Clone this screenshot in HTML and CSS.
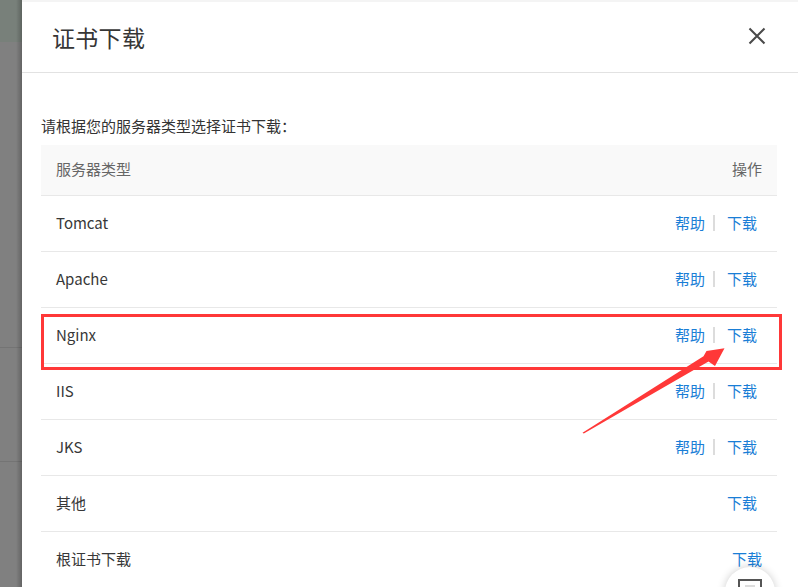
FILE: index.html
```html
<!DOCTYPE html>
<html lang="zh-CN">
<head>
<meta charset="utf-8">
<title>证书下载</title>
<link rel="stylesheet" href="styles.css">
</head>
<body>
<div class="page">
  <div class="backdrop">
    <div class="bd-top"></div>
    <div class="bd-mid"></div>
    <div class="bd-line"></div>
    <div class="bd-mid2"></div>
    <div class="bd-line"></div>
    <div class="bd-rest"></div>
  </div>
  <div class="dialog">
    <div class="dialog-header">
      <h1 class="title">证书下载</h1>
      <svg class="close" width="18" height="18" viewBox="0 0 18 18">
        <path d="M1.5 1.5 L16.5 16.5 M16.5 1.5 L1.5 16.5" stroke="#4a4a4a" stroke-width="2.1" fill="none"/>
      </svg>
    </div>
    <div class="dialog-body">
      <p class="hint">请根据您的服务器类型选择证书下载：</p>
      <div class="table">
        <div class="row head">
          <span class="name">服务器类型</span>
          <span class="ops">操作</span>
        </div>
        <div class="row">
          <span class="name">Tomcat</span>
          <span class="ops"><a class="link">帮助</a><i class="sep"></i><a class="link">下载</a></span>
        </div>
        <div class="row">
          <span class="name">Apache</span>
          <span class="ops"><a class="link">帮助</a><i class="sep"></i><a class="link">下载</a></span>
        </div>
        <div class="row">
          <span class="name">Nginx</span>
          <span class="ops"><a class="link">帮助</a><i class="sep"></i><a class="link">下载</a></span>
        </div>
        <div class="row">
          <span class="name">IIS</span>
          <span class="ops"><a class="link">帮助</a><i class="sep"></i><a class="link">下载</a></span>
        </div>
        <div class="row">
          <span class="name">JKS</span>
          <span class="ops"><a class="link">帮助</a><i class="sep"></i><a class="link">下载</a></span>
        </div>
        <div class="row">
          <span class="name">其他</span>
          <span class="ops"><a class="link">下载</a></span>
        </div>
        <div class="row last">
          <span class="name">根证书下载</span>
          <span class="ops"><a class="link">下载</a></span>
        </div>
      </div>
    </div>
  </div>

  <div class="overlay">
    <div class="mark-box"></div>
    <svg class="mark-arrow" width="798" height="587" viewBox="0 0 798 587">
      <polygon points="582.5,432.8 703.5,356.2 706.5,351 724.5,348.3 715,366 708.5,361.5 583.8,433.6" fill="#ff3838"/>
    </svg>
    <div class="float-btn">
      <svg width="24" height="12" viewBox="0 0 24 12">
        <rect x="1" y="1" width="22" height="14" fill="#fff" stroke="#555" stroke-width="2"/>
        <path d="M7 7 H17" stroke="#bbb" stroke-width="1"/>
      </svg>
    </div>
  </div>
</div>
</body>
</html>
```

FILE: styles.css
```css
* { box-sizing: border-box; }
html, body {
  margin: 0;
  padding: 0;
  width: 798px;
  height: 587px;
  overflow: hidden;
  background: #7f7f7f;
  font-family: "Noto Sans CJK SC", "Noto Sans", sans-serif;
}
.page {
  display: flex;
  width: 798px;
  height: 587px;
  position: relative;
  overflow: hidden;
}
.backdrop {
  width: 22px;
  flex: none;
  display: flex;
  flex-direction: column;
  position: relative;
}
.backdrop::after {
  content: "";
  position: absolute;
  top: 0; bottom: 0; right: 0;
  width: 6px;
  background: linear-gradient(to right, rgba(0,0,0,0), rgba(0,0,0,0.22));
}
.bd-top { height: 42px; background: #78807a; }
.bd-mid { height: 305px; background: #808080; }
.bd-line { height: 1px; background: #747474; }
.bd-mid2 { height: 113px; background: #808080; }
.bd-rest { flex: 1; background: #808080; }

.dialog {
  flex: 1;
  background: #fff;
  display: flex;
  flex-direction: column;
  border-top: 2px solid #f4f4f4;
  overflow: hidden;
}
.dialog-header {
  height: 71px;
  flex: none;
  border-bottom: 1px solid #e2e2e2;
  display: flex;
  align-items: center;
  justify-content: space-between;
  padding: 0 32px 0 30px;
}
.title {
  margin: 0;
  font-size: 23px;
  font-weight: normal;
  color: #363636;
  line-height: 30px;
  letter-spacing: 0.3px;
}
.close { display: block; margin-top: -2px; }

.dialog-body {
  padding: 0 21px 0 19px;
}
.hint {
  margin: 43px 0 9px;
  font-size: 15px;
  line-height: 20px;
  color: #333;
}
.table {
  display: flex;
  flex-direction: column;
}
.row {
  height: 56px;
  flex: none;
  border-bottom: 1px solid #e8e8e8;
  display: flex;
  align-items: center;
  justify-content: space-between;
  padding: 0 20px 2px 15px;
  font-size: 15px;
  line-height: 20px;
  color: #383838;
}
.row.head {
  height: 51px;
  background: #f9f9f9;
  color: #666;
  padding-right: 15px;
}
.row.last {
  padding-right: 15px;
  border-bottom: none;
}
.ops {
  display: flex;
  align-items: center;
}
.link {
  color: #1a7ed6;
  cursor: pointer;
}
.sep {
  display: inline-block;
  width: 2px;
  height: 16px;
  background: #dcdcdc;
  margin: 0 12px 0 8px;
}

.overlay {
  position: absolute;
  left: 0;
  top: 0;
  width: 798px;
  height: 587px;
  overflow: hidden;
  pointer-events: none;
}
.mark-box {
  position: absolute;
  left: 41px;
  top: 314px;
  width: 741px;
  height: 56px;
  border: 3px solid #ff3838;
}
.mark-arrow {
  position: absolute;
  left: 0;
  top: 0;
}
.float-btn {
  position: absolute;
  left: 725px;
  top: 567px;
  width: 50px;
  height: 50px;
  border-radius: 50%;
  background: #fff;
  box-shadow: 0 0 8px rgba(0,0,0,0.2);
  display: flex;
  justify-content: center;
  padding-top: 12px;
}
.float-btn svg { display: block; }
```
